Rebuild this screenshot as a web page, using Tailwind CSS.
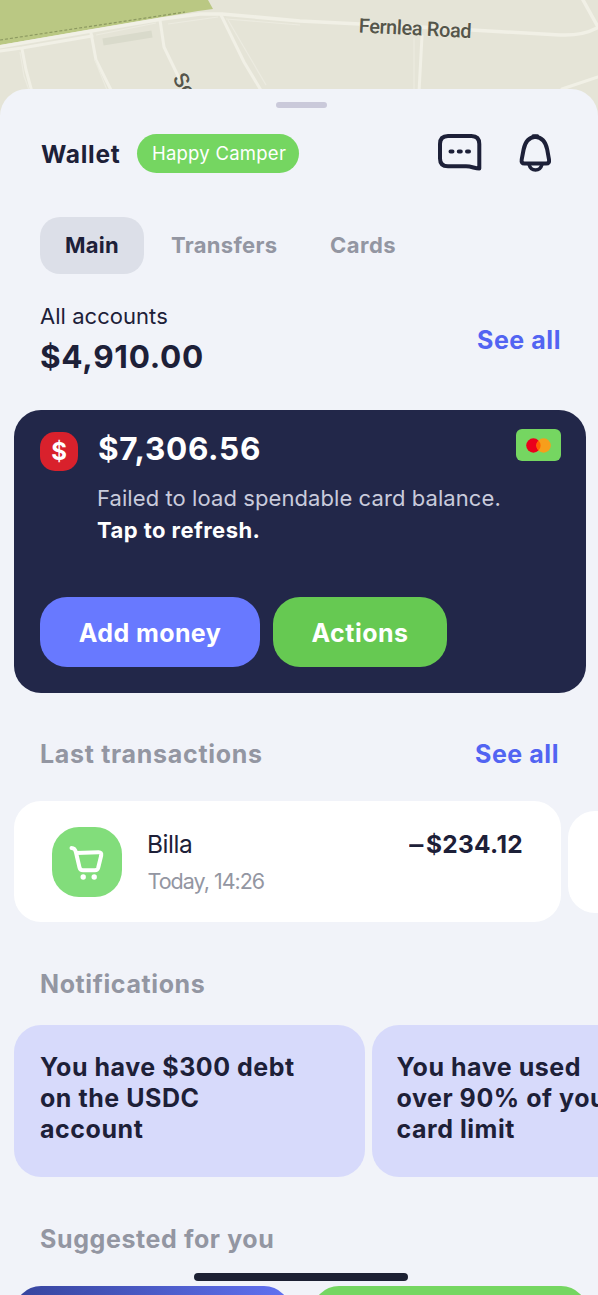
<!DOCTYPE html>
<html lang="en">
<head>
<meta charset="utf-8">
<title>Wallet</title>
<script src="https://cdn.jsdelivr.net/npm/@tailwindcss/browser@4"></script>
</head>
<body class="relative flex h-[1295px] w-[598px] flex-col overflow-hidden bg-[#e5e4d7] font-['Inter',sans-serif] text-[#1d2038]">

  <!-- Map -->
  <svg class="absolute left-0 top-0" width="598" height="120" viewBox="0 0 598 120" fill="none">
    <path d="M0 0H208L213 9L198 11L0 45Z" fill="#bac883"/>
    <path d="M0 40L185 12" stroke="#8c9960" stroke-width="1.2" stroke-dasharray="3 2"/>
    <path d="M103 42L152 34" stroke="#d9dacb" stroke-width="7"/>
    <g stroke="#f1f0e6" stroke-width="3" stroke-linecap="round">
      <path d="M-2 47L91 31L162 19L200 14L222 14L300 21L420 27L560 35Q582 36 597 28M598 27L583 0" stroke-width="3.5"/>
      <path d="M0 51L22 48L92 36"/>
      <path d="M22 49L26 70L32 92M91 33L96 60L111 90M160 20L164 47L180 80M221 15L244 62L262 92M422 36L419 92M562 89L598 77"/>
    </g>
    <g stroke="#ecebe0" stroke-width="1.2">
      <path d="M96 35L156 23M168 24L218 17M228 20L266 85M414 38L414 90M20 52L24 76L29 90M95 60L107 90M226 19L300 25"/>
    </g>
    <g font-family="Roboto, sans-serif" font-weight="500" fill="#55564b" stroke="#eceade" stroke-width="1" paint-order="stroke" stroke-linejoin="round">
      <text x="358.500" y="32.500" font-size="20" textLength="113" transform="rotate(2.800 358.500 32.500)">Fernlea Road</text>
      <text x="172" y="78.500" font-size="21" transform="rotate(58 172 78.500)">So</text>
    </g>
  </svg>

  <!-- Sheet -->
  <main class="relative mt-[89px] flex h-[1206px] flex-col rounded-t-[27px] bg-[#f1f3f9]">
    <div class="mx-auto mt-[13px] h-[6px] w-[51px] translate-x-[2px] rounded-full bg-[#cac9da]"></div>

    <header class="mt-[26px] flex h-[38px] items-center pl-[41px] pr-[46px]">
      <h1 class="w-[96px] pt-[2px] text-[24.5px] font-bold leading-[38px] tracking-[0.75px]">Wallet</h1>
      <span class="flex h-[39px] w-[162px] items-center justify-center whitespace-nowrap rounded-full bg-[#75d661] pl-[2px] pt-px text-[18.5px] tracking-[0.25px] text-white">Happy Camper</span>
      <svg class="ml-auto" width="44" height="38" viewBox="438 134 44 38" fill="none" stroke="#1d2038" stroke-width="4" stroke-linejoin="round">
        <path d="M448 136H471.500Q479.300 136 479.300 144V168.500C474.500 168.500 472 166.300 466 166.300H448Q440 166.300 440 158.500V144Q440 136 448 136Z"/>
        <path d="M450.500 151.500H452.500M458.800 151.500H460.800M467 151.500H469" stroke-linecap="round"/>
      </svg>
      <svg class="ml-[37px]" width="33" height="38" viewBox="519 134 33 38" fill="none" stroke="#1d2038" stroke-width="4" stroke-linejoin="round">
        <path d="M535.300 136.800C528 137.500 524.800 143.500 523.600 149.500L521.700 159.500Q521 163.500 524.500 163.500H546.200Q549.700 163.500 549 159.500L547.200 149.500C546 143.500 542.700 137.500 535.300 136.800Z"/>
        <path d="M533 135.800H537.600" stroke-linecap="round" stroke-width="3"/>
        <path d="M529 164.500Q530.500 170 535.500 170T542 164.500" stroke-width="3.400"/>
      </svg>
    </header>

    <nav class="mt-[45px] flex h-[57px] items-center pl-[40px] text-[22px] font-bold text-[#9396a2]">
      <span class="flex h-[57px] w-[104px] items-center justify-center rounded-[20px] bg-[#dcdfe8] tracking-[0.3px] text-[#1d2038]">Main</span>
      <span class="ml-[27px] w-[159px] tracking-[0.32px]">Transfers</span>
      <span class="tracking-[0.5px]">Cards</span>
    </nav>

    <section class="mt-[30px] flex h-[72px] items-center justify-between pl-[40px] pr-[37px]">
      <div>
        <div class="text-[22px] leading-[24px] tracking-[0.04px]">All accounts</div>
        <div class="mt-[10px] text-[31.5px] font-bold leading-[38px] tracking-[0.72px]">$4,910.00</div>
      </div>
      <a class="pt-px text-[25px] font-bold tracking-[0.55px] text-[#5264f2]">See all</a>
    </section>

    <section class="ml-[14px] mt-[34px] flex h-[283px] w-[572px] flex-col rounded-[27px] bg-[#222749] px-[26px] text-white">
      <div class="flex pt-[19px]">
        <div class="mt-[3px] flex h-[39px] w-[38px] items-center justify-center rounded-[15px] bg-[#d9212c] text-[24px] font-bold">$</div>
        <div class="ml-[20px]">
          <div class="text-[31.5px] font-bold leading-[40px] tracking-[0.7px]">$7,306.56</div>
          <div class="-ml-px mt-[13px] whitespace-nowrap text-[22px] leading-[32px] tracking-[0.08px] text-[#c9cbdc]">Failed to load spendable card balance.</div>
          <div class="-ml-px text-[22px] font-bold leading-[32px] tracking-[0.45px]">Tap to refresh.</div>
        </div>
        <div class="ml-auto flex h-[32px] w-[45px] -mr-px shrink-0 items-center justify-center rounded-[6px] bg-[#75d661]">
          <svg width="25" height="15" viewBox="0 0 25 15"><circle cx="7.400" cy="7.500" r="7.200" fill="#eb001b"/><circle cx="17.600" cy="7.500" r="7.200" fill="#f79e1b"/><path d="M12.500 2.400a7.200 7.200 0 0 1 0 10.200a7.200 7.200 0 0 1 0-10.200Z" fill="#ff5f00"/></svg>
        </div>
      </div>
      <div class="mb-[26px] mt-auto flex gap-[13px] text-[25px] font-bold">
        <button class="h-[70px] w-[220px] rounded-[27px] bg-[#6879ff] pt-[4px] tracking-[0.4px]">Add money</button>
        <button class="h-[70px] w-[174px] rounded-[27px] bg-[#66c952] pt-[4px] tracking-[0.5px]">Actions</button>
      </div>
    </section>

    <div class="mt-[47px] flex h-[30px] items-center justify-between pl-[40px] pr-[39px] text-[25px] font-bold">
      <h2 class="tracking-[0.7px] text-[#9396a2]">Last transactions</h2>
      <a class="tracking-[0.55px] text-[#5264f2]">See all</a>
    </div>

    <section class="ml-[14px] mt-[31px] flex h-[121px] items-center gap-[7px] overflow-hidden">
      <article class="flex h-[121px] w-[547px] shrink-0 items-center rounded-[27px] bg-white pl-[38px] pr-[38px]">
        <div class="h-[70px] w-[70px] rounded-[27px] bg-[#82dd7b]">
          <svg width="71" height="70" viewBox="52 827 71 70" fill="none" stroke="#fff" stroke-width="4" stroke-linecap="round" stroke-linejoin="round">
            <path d="M71.500 848C74.500 848 75.300 849.500 76 852.500L79.500 867.500Q80.200 870.300 83 870.300H95Q97.500 870.300 98.200 867.800L101.200 855.500Q101.800 852.200 98.600 852.200L76.500 853"/>
            <circle cx="83.200" cy="877" r="2.700" fill="#fff" stroke="none"/><circle cx="94.200" cy="877" r="2.700" fill="#fff" stroke="none"/>
          </svg>
        </div>
        <div class="ml-[25px] pt-[2px]">
          <div class="text-[24.5px] leading-[37px] tracking-[-0.46px]">Billa</div>
          <div class="ml-[0.5px] text-[21.5px] leading-[37px] tracking-[-1px] text-[#9396a2]">Today, 14:26</div>
        </div>
        <div class="mb-[35px] ml-auto flex gap-[3px] text-[24.5px] font-bold leading-[37px]"><span class="inline-block origin-right scale-x-115">–</span><span class="tracking-[0.3px]">$234.12</span></div>
      </article>
      <article class="h-[102px] w-[200px] shrink-0 rounded-[27px] bg-white"></article>
    </section>

    <h2 class="mt-[47px] pl-[40px] text-[25px] font-bold leading-[30px] tracking-[0.6px] text-[#9396a2]">Notifications</h2>

    <section class="ml-[14px] mt-[26px] flex h-[152px] gap-[6.500px] overflow-hidden text-[25px] font-bold leading-[31px] tracking-[0.54px]">
      <article class="w-[351px] shrink-0 whitespace-nowrap rounded-[27px] bg-[#d7dafb] pl-[26px] pt-[27px]">You have $300 debt<br>on the USDC<br>account</article>
      <article class="w-[351px] shrink-0 whitespace-nowrap rounded-[27px] bg-[#d7dafb] pl-[25px] pt-[27px]">You have used<br>over 90% of your<br>card limit</article>
    </section>

    <h2 class="mt-[47px] pl-[40px] text-[25px] font-bold leading-[30px] tracking-[0.6px] text-[#9396a2]">Suggested for you</h2>

    <section class="mt-[32px] flex h-[9px] gap-[21px] overflow-hidden pl-[14px]">
      <div class="h-[120px] w-[277px] shrink-0 rounded-[27px] bg-linear-to-r from-[#36449d] to-[#6172f2]"></div>
      <div class="h-[120px] w-[276px] shrink-0 rounded-[27px] bg-[#75d661]"></div>
    </section>
  </main>

  <!-- Home indicator -->
  <div class="absolute left-[194px] top-[1273px] h-[8px] w-[214px] rounded-full bg-[#1c2033]"></div>
</body>
</html>
